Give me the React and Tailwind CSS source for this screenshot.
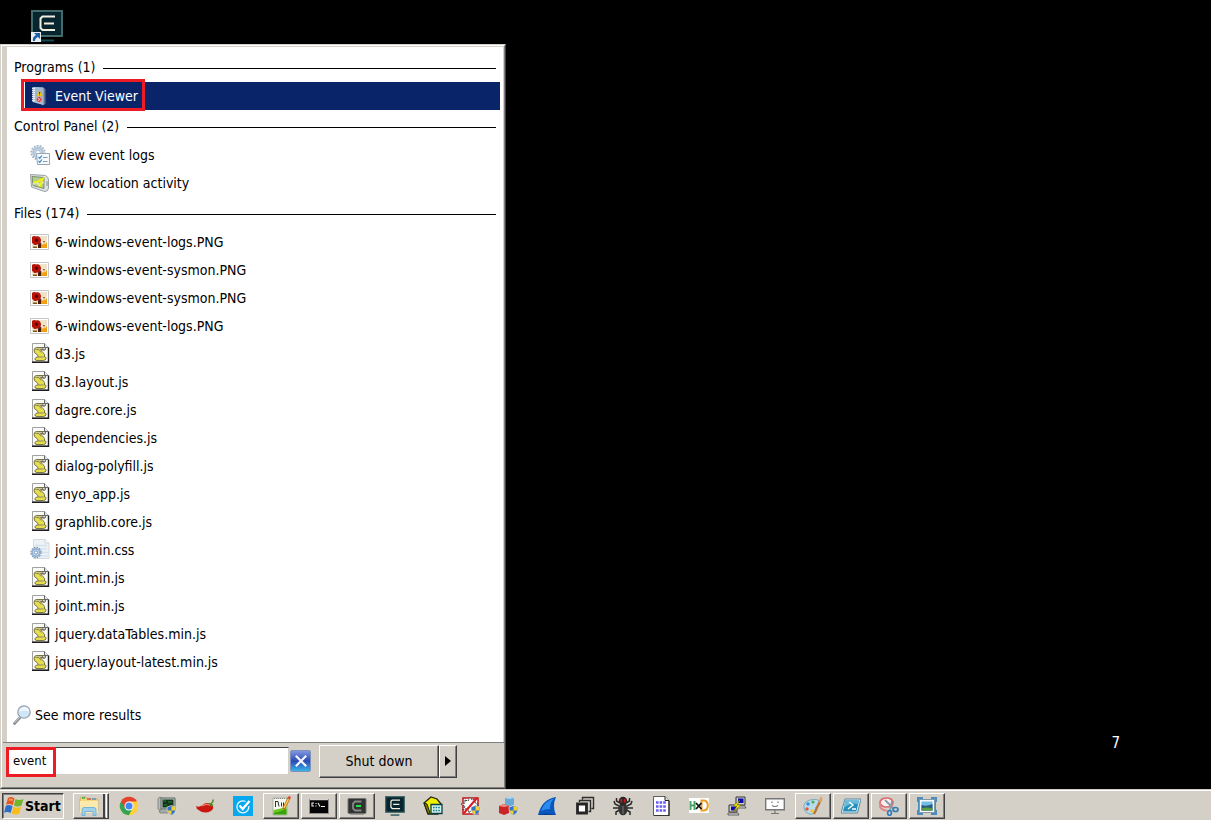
import { useState } from "react";

function EventViewerIcon() {
  return (
    <svg className="w-5 h-5 shrink-0" viewBox="0 0 20 20">
      <path d="M13 1.5 L15.500 3 L15.500 18 L12 19.500 Z" fill="#5f7290" />
      <path d="M2.500 1 L13.500 1.500 L13.500 19 L2.500 16 Z" fill="#b9c9dc" />
      <path d="M5 1.300 L13 1.800 L13 18 L5 15.800 Z" fill="#a3b7d0" />
      <path d="M2 2.500h3M2 4.500h3M2 6.500h3M2 8.500h3M2 10.500h3M2 12.500h3M2 14.500h3" stroke="#eff4fa" strokeWidth=".9" />
      <path d="M9.500 4.500 L12.700 10 L6.500 10 Z" fill="#f9d71c" stroke="#b4930d" strokeWidth=".4" />
      <path d="M9.600 6v2.200M9.600 8.700v.7" stroke="#222" strokeWidth=".9" />
      <circle cx="9.300" cy="13.500" r="2.700" fill="#d9251d" stroke="#f3d5d2" strokeWidth=".5" />
      <path d="M8.100 12.300l2.400 2.400M10.500 12.300l-2.400 2.400" stroke="#fff" strokeWidth=".9" />
    </svg>
  );
}

function GearListIcon() {
  return (
    <svg className="w-5 h-5 shrink-0" viewBox="0 0 20 20">
      <circle cx="8" cy="7.500" r="6.700" fill="none" stroke="#9fb4c8" strokeWidth="1.800" strokeDasharray="1.800 1.200" />
      <circle cx="8" cy="7.500" r="4.600" fill="#dbe6f1" stroke="#b3c6d8" strokeWidth="2.600" />
      <circle cx="8" cy="7.500" r="2.300" fill="#fff" stroke="#8fa9c4" strokeWidth=".8" />
      <path d="M6.500 8.500h13v11h-12z" fill="#f7fafc" stroke="#9aa6b2" />
      <path d="M13 12.500h4.500M13 16.500h4.500" stroke="#8b9aa9" />
      <path d="M8.500 12l1.300 1.300L12 10.500M8.500 16l1.300 1.300 2.200-2.800" fill="none" stroke="#2c86cc" strokeWidth="1.200" />
    </svg>
  );
}

function LocationIcon() {
  return (
    <svg className="w-5 h-5 shrink-0" viewBox="0 0 20 20">
      <path d="M.5 1.500 L15.500 2.500 Q18.500 4 18.500 7 L18.500 15 Q18 18.500 15 18.500 L13 18 L1.500 14 Z" fill="#e0e3e4" stroke="#9aa0a4" />
      <path d="M2 3.500 L14 4.500 L14 15.500 L3 12.500 Z" fill="#b4cf86" stroke="#66785c" strokeWidth=".8" />
      <path d="M3 11 L7 9 L9 12 L13.500 9" fill="none" stroke="#dcebb4" strokeWidth="2" />
      <path d="M3.500 9 L8 8.500 L13 5.500 L11 10 L10 14" fill="none" stroke="#f6f200" strokeWidth="1.700" />
      <path d="M17 8v5" stroke="#82898e" />
    </svg>
  );
}

function ImageIcon() {
  return (
    <svg className="w-5 h-5 shrink-0" viewBox="0 0 20 20">
      <path d="M.5 2.500h18v15H.5z" fill="#fff" stroke="#c6c6c6" />
      <path d="M2 4h15v12H2z" fill="#efe3cb" />
      <path d="M2 5 Q4 3.500 6 4.500 Q8 3.500 10 5.500 Q12 8 10.500 10.500 Q10 13 7 12.500 Q4 14 3 11.500 L2 11z" fill="#b81209" />
      <circle cx="6.500" cy="8.300" r="1.700" fill="#5c0703" />
      <path d="M8 12.500 L11 10.500 L12 16 L8 16z" fill="#4c1a0a" />
      <path d="M11 16 L11 11.500 L13 13 L14 11 L15 12.500 L17 10 L17 16z" fill="#f0a012" />
      <path d="M13 9l1 2 1-2M3 14.500h4V16H3z" fill="#7a5518" />
    </svg>
  );
}

function ScriptIcon() {
  return (
    <svg className="w-5 h-5 shrink-0 -mt-0.5" viewBox="0 0 20 20">
      <path d="M2.500.500 H14.500 L18.500 4.500 V19 H2.500z" fill="#fafafa" stroke="#a2a2a2" />
      <path d="M18.500 4.500V19.300H2" fill="none" stroke="#1e1e1e" strokeWidth="1.400" />
      <path d="M14.500.500v4h4" fill="#e5e5e5" stroke="#444" strokeWidth=".8" />
      <path d="M6.500 4.500h7q2.500 0 1.500 2.500h-2q-.5-1-2-.5 0 1.500 2 3 2.500 2 1.500 4.500 2 0 1.500 1.500-.5 2-2.500 2H7q-2.500 0-2-2 .5-1.500 2.500-1.500 1.500-.5 0-2-4-2-3.500-5 .5-2.500 2.500-2.500z" fill="#e5dd4e" stroke="#6b6836" strokeWidth=".9" />
      <path d="M5.500 6.500h3.500l2 3M7.500 14h6M10 6.500l3 .500" fill="none" stroke="#77745a" strokeWidth=".8" />
      <path d="M6.500 5.500h5" stroke="#c4c3ae" />
      <ellipse cx="14" cy="5.800" rx="1.500" ry="1.200" fill="#fff" stroke="#444" strokeWidth=".8" />
    </svg>
  );
}

function CssIcon() {
  return (
    <svg className="w-5 h-5 shrink-0 -mt-0.5" viewBox="0 0 20 20">
      <path d="M3.500.500 H15 L19 4 V19.500 H3.500z" fill="#edf2f6" stroke="#d3dae0" />
      <path d="M15 .500V4h4" fill="#fff" stroke="#ccd4db" />
      <path d="M5 6.500h12M5 10h12M9 13.500h9M11 17h7" stroke="#d4e2ee" strokeWidth="1.500" />
      <circle cx="6" cy="13.500" r="5" fill="none" stroke="#7f9fc0" strokeWidth="1.500" strokeDasharray="1.600 1" />
      <circle cx="6" cy="13.500" r="3.700" fill="#dce9f5" stroke="#8fb0d0" strokeWidth="1.700" />
      <circle cx="6" cy="13.500" r="1.700" fill="#fff" stroke="#6b91b8" />
    </svg>
  );
}

function SearchIcon() {
  return (
    <svg className="w-5 h-5 shrink-0" viewBox="0 0 20 20">
      <path d="M7 12.500 L1.500 18.500" stroke="#858a90" strokeWidth="2.600" strokeLinecap="round" />
      <path d="M6.500 12.500 L2 17.500" stroke="#cfd4d9" strokeLinecap="round" />
      <circle cx="11" cy="7" r="6.200" fill="#cfe6f8" stroke="#9da4ad" strokeWidth="1.300" />
      <path d="M6 7 Q7.500 2 12.500 2 Q16.500 3.500 16 6.500 Q10.500 4.500 6 7z" fill="#f1f9ff" />
    </svg>
  );
}

function WindowsLogo() {
  return (
    <svg className="w-5 h-5 shrink-0" viewBox="0 0 20 20">
      <path d="M4 2 Q7 0 10.500 2.500 L8.800 9.300 Q5.500 7 2 8.800z" fill="#e8551e" />
      <path d="M11.500 3 Q15 5 19.500 3 L17.500 9.600 Q13.500 11.500 9.900 9.500z" fill="#72b42c" />
      <path d="M1.700 9.900 Q5 8 8.500 10.300 L6.700 17 Q3.500 15 0 16.700z" fill="#2c70cb" />
      <path d="M9.500 10.700 Q13 12.700 17.200 10.700 L15.200 17.500 Q11.500 19.500 7.700 17.500z" fill="#f8bd18" />
      <path d="M5 3 Q7 2 9 3.300L8.400 5Q6.300 4 4.500 4.700z" fill="#f99a5d" />
    </svg>
  );
}

function EmblemIcon({ className = "w-5 h-5" }) {
  return (
    <svg className={className} viewBox="0 0 32 32">
      <rect x="1" y="1" width="30" height="25" fill="#06252e" stroke="#446b6c" strokeWidth="2" />
      <path d="M24 6.500H11.500L9.500 8.500v9.500l2 2H24M13 13.500h10" fill="none" stroke="#f1eddf" strokeWidth="2" />
      <path d="M9 30.500h14" stroke="#174950" strokeWidth="2" />
    </svg>
  );
}

function Shield() {
  return (
    <g>
      <path d="M14.500 9.500 L19 11 Q19.500 17 14.500 19.500 Q9.500 17 10 11z" fill="#2f74c6" stroke="#e5e5dd" strokeWidth=".7" />
      <path d="M14.500 10 L18.500 11.300 L18.500 14.500H14.500zM10.500 14.500h4V19Q11.300 17.500 10.500 14.500" fill="#f5cf32" />
    </g>
  );
}

const drawings = {
  explorer: (
    <>
      <path d="M1 3 Q1 1 3 1h4l1 2h10q1 0 1 2v10H1z" fill="#f4d77e" stroke="#c9a44a" strokeWidth=".7" />
      <path d="M3 2h3" stroke="#35a852" strokeWidth="1.500" />
      <path d="M8 3h4" stroke="#e04836" strokeWidth="1.300" />
      <path d="M13 3h4" stroke="#438bd4" strokeWidth="1.300" />
      <path d="M1 5h18v12H1z" fill="#fbe9ad" />
      <path d="M3 19.500v-6q0-2 2-2h10q2 0 2 2v6h-3v-4H6v4z" fill="#9fd1ee" stroke="#63a9d5" strokeWidth=".8" />
    </>
  ),
  chrome: (
    <>
      <circle cx="10" cy="10" r="9.200" fill="#ffcf3e" />
      <path d="M10 10 L2 5.400 A9.200 9.200 0 0 1 18 5.400z" fill="#e3422f" />
      <path d="M10 10 L2 5.400 A9.200 9.200 0 0 0 10 19.200 L14 12z" fill="#33a552" />
      <path d="M10 5.500h8A9.200 9.200 0 0 1 10 19.200L14 12z" fill="#ffcf3e" />
      <path d="M10 5.500H2L6 12z" fill="#e3422f" />
      <circle cx="10" cy="10" r="4.500" fill="#fff" />
      <circle cx="10" cy="10" r="3.500" fill="#4285f4" />
    </>
  ),
  monitor: (
    <>
      <path d="M1 2.500l2-1.500 2 1v11l-2 1-2-1z" fill="#b7bbb9" stroke="#696d6c" strokeWidth=".7" />
      <path d="M4 2h14v11H4z" fill="#c1c9c4" stroke="#596660" />
      <path d="M5.500 3.500h11v8h-11z" fill="#12351b" />
      <path d="M6 5h3M11 6h4M7 9h3" stroke="#2c8f3e" strokeWidth=".9" />
      <path d="M2 15l3-2h8l-2 4H3z" fill="#a5aba8" stroke="#6d7370" strokeWidth=".7" />
      <Shield />
    </>
  ),
  chili: (
    <>
      <path d="M1 10 Q4 11.500 7 9.500 Q12 5 17 9 Q20 12 16 15 Q9 19 2 13z" fill="#c91712" />
      <path d="M7 10 Q12 7 15 9.500" fill="none" stroke="#f27b66" strokeWidth="1.300" />
      <path d="M13 7.500 Q16 6 18.500 9 L16.500 10.500z" fill="#4c8b24" />
      <path d="M16 7.500 Q18.500 6 18 3.500" fill="none" stroke="#4c8b24" strokeWidth="1.400" />
    </>
  ),
  check: (
    <>
      <path d="M0 0h20v20H0z" fill="#08a8ee" />
      <path d="M15.800 10 A6 6 0 1 1 12.500 5.500" fill="none" stroke="#eaf8ff" strokeWidth="1.300" />
      <path d="M6.500 9.500l3.200 3.500L16.500 5" fill="none" stroke="#fff" strokeWidth="2.400" />
    </>
  ),
  notepad: (
    <>
      <path d="M2 2h14v17H2z" fill="#f6f9f1" stroke="#9caa91" strokeWidth=".8" />
      <path d="M2.500 14 Q8 13 15.500 11v7.500h-13z" fill="#6bc91e" />
      <path d="M2.500 17Q8 16 15.500 13v5.500h-13z" fill="#39a10e" />
      <path d="M4.500 5v6M4.500 5.500h2.500l1 5M10.500 6.500v4M12.500 6.500v4" fill="none" stroke="#333" />
      <path d="M3 2.500h12" stroke="#888" strokeDasharray="1 1" />
      <path d="M18 2 L12.500 13" stroke="#b86d16" strokeWidth="3" />
      <path d="M17.500 3 L13 12" stroke="#ffd24f" strokeWidth="1.500" />
      <path d="M17.500 3L19 .500" stroke="#db4b41" strokeWidth="2.500" />
    </>
  ),
  console: (
    <>
      <path d="M.5 3.500h19v14H.5z" fill="#050505" stroke="#8c8c8c" />
      <path d="M1 3.500h18" stroke="#d7d7d7" strokeWidth="1.500" />
      <path d="M5 7H3v3h2M7 7v1M7 9.500v1M9 7l2 3.500M12 10.500h4" fill="none" stroke="#eee" strokeWidth="1.100" />
    </>
  ),
  terminal: (
    <>
      <rect x="1" y="2.500" width="18" height="15" rx="1" fill="#303331" stroke="#747675" />
      <path d="M14.500 5.500H8L6 7.500v5l2 2h6.500" fill="none" stroke="#858985" strokeWidth="1.800" />
      <path d="M9 10h5" stroke="#1ee34f" strokeWidth="2" />
      <path d="M3 18.500h14" stroke="#999" />
    </>
  ),
  organizer: (
    <>
      <path d="M1 7 L8 1 L14 3 L18 8 L15 18 L5 18z" fill="#f1ee00" stroke="#24240b" strokeWidth="1.300" />
      <path d="M1 7l4 11 2-1L4 8z" fill="#77770a" stroke="#24240b" />
      <path d="M8 8.500h11v9H8z" fill="#d8f1ed" stroke="#073f48" strokeWidth="1.300" />
      <path d="M10 11.500h7M10 14.500h7" stroke="#087f91" strokeWidth="1.600" strokeDasharray="1.600 1" />
    </>
  ),
  blocked: (
    <>
      <path d="M2 2h15v16H2z" fill="#fff" stroke="#bd171c" strokeWidth="1.500" />
      <path d="M4 4l3 1 2-4 2 3 4-1-1 4 4 2-4 1 1 4-4-1-3 4-1-5-5 2 2-4-4-2 4-1z" fill="#fff" stroke="#353535" strokeDasharray="2 1" />
      <path d="M3 17L16 2" stroke="#dc1a20" strokeWidth="2" />
      <Shield />
    </>
  ),
  cubes: (
    <>
      <path d="M6 2l5-1 4 1v7l-5 2-4-2z" fill="#6aaad9" />
      <path d="M6 2l4 1 5-1-4-1z" fill="#b4dcf3" />
      <path d="M0 10l5-2 5 2v7l-5 2-5-2z" fill="#cb2424" />
      <path d="M0 10l5 1 5-1-5-2z" fill="#f38a7b" />
      <Shield />
    </>
  ),
  fin: (
    <>
      <path d="M1 19 Q5 3 19 1 Q15 10 19 19z" fill="#0757bf" />
      <path d="M4 15 Q7 5 17 2.500 Q13 6 13 13 Q8 13 4 15z" fill="#2d8aed" />
      <path d="M1 19Q8 16 19 19z" fill="#043f93" />
    </>
  ),
  windows: (
    <>
      <path d="M7.500 3.500V1.500h11V12.500H16.500M4.500 6V4.500h11v11H13.500" fill="none" stroke="#2d2d2d" strokeWidth="1.400" />
      <path d="M2.500 8h9v9h-9z" fill="#fff" stroke="#252525" strokeWidth="2.800" />
    </>
  ),
  bug: (
    <>
      <path d="M7 7L3.500 5V2M13 7l3.500-2V2M6 10L2 8 1 5M14 10l4-2 1-3M6 12H0M14 12h6M6.500 14L3 16v3M13.500 14l3.500 2v3" fill="none" stroke="#292929" strokeWidth="1.500" />
      <ellipse cx="10" cy="13" rx="4.600" ry="6.300" fill="#343434" />
      <circle cx="10" cy="5" r="4.200" fill="#292929" />
      <path d="M8.300 3v3.500M11.700 3v3.500" stroke="#d4161b" strokeWidth="1.600" />
      <path d="M10 10v8" stroke="#777" />
    </>
  ),
  sheet: (
    <>
      <path d="M2.500.500H14l4 4v15H2.500z" fill="#fff" stroke="#5d5d5d" />
      <path d="M14 .500v4h4" fill="#ddd" stroke="#222" />
      <path d="M18 5v15H3" fill="none" stroke="#111" />
      <path d="M5 6.500h10M5 10.500h10M5 14.500h10" stroke="#665eef" strokeWidth="2.600" strokeDasharray="2.600 1" />
    </>
  ),
  hex: (
    <>
      <path d="M0 2h20v15H0z" fill="#fff" />
      <path d="M1.500 5v9M5.500 5v9M1.500 9.500h4" fill="none" stroke="#48a365" strokeWidth="2" />
      <path d="M12.500 4.500h2.500Q18.800 5 18.800 9.500T15 14.500h-2.500z" fill="none" stroke="#ef9d29" strokeWidth="2" />
      <path d="M7 7l5.500 6M12.500 7L7 13" stroke="#111" strokeWidth="1.800" />
    </>
  ),
  putty: (
    <>
      <path d="M9 1h9v8H9z" fill="#d1d1d1" stroke="#333" />
      <path d="M11 2.500h5.500v4.500H11z" fill="#080aab" />
      <path d="M8 10h10l1 2H8z" fill="#ddd" stroke="#333" strokeWidth=".7" />
      <path d="M2 9h8v7H2z" fill="#d1d1d1" stroke="#333" />
      <path d="M4 10.500h5v4H4z" fill="#080aab" />
      <path d="M1 17h10l1 2H1z" fill="#ddd" stroke="#333" strokeWidth=".7" />
      <path d="M13 4L6 10h4l-4 6 8-7h-4z" fill="#fff200" stroke="#655c00" strokeWidth=".5" />
    </>
  ),
  face: (
    <>
      <path d="M.7 2.700h18.600v11H.7z" fill="#fff" stroke="#777" strokeWidth="1.400" />
      <path d="M7 5.500V7M13 5.500V7M7 9.500q3 2 6 0M10 14v3M6 17.500h8" fill="none" stroke="#777" strokeWidth="1.200" />
    </>
  ),
  paint: (
    <>
      <path d="M1 12Q0 6 7 4q8-2 10 2 1 3-3 4-3 1 0 4-2 5-8 4Q1 16 1 12z" fill="#b7dced" stroke="#6b9fb7" strokeWidth=".8" />
      <circle cx="5" cy="8" r="1.700" fill="#3e89d2" />
      <circle cx="10" cy="6" r="1.600" fill="#50ac4d" />
      <circle cx="4" cy="13" r="1.700" fill="#e55445" />
      <circle cx="9" cy="15" r="1.700" fill="#f1c52f" />
      <path d="M17.500 4L11 18" stroke="#bd7230" strokeWidth="2.200" />
      <path d="M16 6q0-4 3-6 1 4-1 7z" fill="#dfa45d" />
    </>
  ),
  powershell: (
    <>
      <path d="M4 3h16l-3.500 14H0z" fill="#d7edf7" stroke="#5c8aa0" />
      <path d="M4.500 4.500H18L15.300 15.500H2z" fill="#268fb9" />
      <path d="M4.500 4.500H18L17 8Q10 6 3 12z" fill="#68bbdb" />
      <path d="M8 6l4 3-5 4M11 13h4" fill="none" stroke="#fff" strokeWidth="1.400" />
    </>
  ),
  scissors: (
    <>
      <ellipse cx="7.500" cy="6.500" rx="6.500" ry="4.500" fill="#f8eeee" stroke="#dc6b6d" strokeWidth="1.700" />
      <path d="M1 7v4q2 3.500 7 3.500" fill="none" stroke="#d98685" strokeWidth="1.600" />
      <path d="M6 4l9 9M13 5l-2 10" stroke="#879aa9" strokeWidth="1.800" />
      <ellipse cx="10.500" cy="17" rx="1.900" ry="2.300" fill="none" stroke="#337dbb" strokeWidth="1.700" />
      <ellipse cx="16.500" cy="13.500" rx="2.500" ry="2" fill="none" stroke="#337dbb" strokeWidth="1.700" />
    </>
  ),
  viewer: (
    <>
      <path d="M0 1h6v4H4v10h2v4H0v-5h1V6H0zM20 1h-6v4h2v10h-2v4h6v-5h-1V6h1z" fill="#4c8cbd" />
      <path d="M2.500 3.500h15v13h-15z" fill="#f8fbfd" stroke="#8499a8" />
      <path d="M4.500 5.500h11v9h-11z" fill="#74bbe5" />
      <path d="M4.500 9q5 2 11-1v6.500h-11z" fill="#245b7e" />
      <path d="M4.500 12.500q5-2 11 0v2h-11z" fill="#5c9d40" />
    </>
  ),
};

const results = [
  {
    title: "Programs (1)",
    items: [{ name: "Event Viewer", icon: EventViewerIcon, selected: true }],
  },
  {
    title: "Control Panel (2)",
    items: [
      { name: "View event logs", icon: GearListIcon },
      { name: "View location activity", icon: LocationIcon },
    ],
  },
  {
    title: "Files (174)",
    items: [
      { name: "6-windows-event-logs.PNG", icon: ImageIcon },
      { name: "8-windows-event-sysmon.PNG", icon: ImageIcon },
      { name: "8-windows-event-sysmon.PNG", icon: ImageIcon },
      { name: "6-windows-event-logs.PNG", icon: ImageIcon },
      { name: "d3.js", icon: ScriptIcon },
      { name: "d3.layout.js", icon: ScriptIcon },
      { name: "dagre.core.js", icon: ScriptIcon },
      { name: "dependencies.js", icon: ScriptIcon },
      { name: "dialog-polyfill.js", icon: ScriptIcon },
      { name: "enyo_app.js", icon: ScriptIcon },
      { name: "graphlib.core.js", icon: ScriptIcon },
      { name: "joint.min.css", icon: CssIcon },
      { name: "joint.min.js", icon: ScriptIcon },
      { name: "joint.min.js", icon: ScriptIcon },
      { name: "jquery.dataTables.min.js", icon: ScriptIcon },
      { name: "jquery.layout-latest.min.js", icon: ScriptIcon },
    ],
  },
];

const taskbar = [
  { icon: "explorer", open: true, stacked: true },
  { icon: "chrome" },
  { icon: "monitor" },
  { icon: "chili" },
  { icon: "check" },
  { icon: "notepad", open: true },
  { icon: "console", open: true },
  { icon: "terminal", open: true },
  { icon: "emblem" },
  { icon: "organizer" },
  { icon: "blocked" },
  { icon: "cubes" },
  { icon: "fin" },
  { icon: "windows" },
  { icon: "bug" },
  { icon: "sheet" },
  { icon: "hex" },
  { icon: "putty" },
  { icon: "face" },
  { icon: "paint", open: true },
  { icon: "powershell", open: true },
  { icon: "scissors", open: true },
  { icon: "viewer", open: true },
];

const raised =
  "border border-t-white border-l-white border-r-[#404040] border-b-[#404040] shadow-[inset_-1px_-1px_0_#808080]";

function ResultItem({ name, icon: Icon, selected }) {
  return (
    <a
      href="#"
      className={`relative h-7 ml-[18px] mr-[3px] pl-[5px] flex items-center gap-[5px] ${
        selected ? "bg-[#0a246a] text-white" : "text-black"
      }`}
    >
      <Icon />
      <span>{name}</span>
      {selected && (
        <span className="absolute -left-1 -top-[3px] w-[124px] h-8 border-3 border-[#ed1c24]" />
      )}
    </a>
  );
}

function ResultGroup({ title, items }) {
  return (
    <section>
      <h2 className="h-[31px] px-[7px] flex items-center gap-2">
        {title}
        <span className="flex-1 h-px mt-1 bg-black" />
      </h2>
      {items.map((item, i) => (
        <ResultItem key={i} {...item} />
      ))}
    </section>
  );
}

function StartMenu() {
  const [query, setQuery] = useState("event");

  return (
    <div className="w-[506px] flex flex-col bg-[#d4d0c8] border border-t-[#d4d0c8] border-l-[#d4d0c8] border-r-[#404040] border-b-[#404040]">
      <div className="flex-1 flex flex-col border border-t-white border-l-white border-r-[#808080] border-b-[#808080]">
        <div className="flex-1 flex flex-col ml-[5px] mt-px mr-px pt-1 bg-white">
          {results.map((group) => (
            <ResultGroup key={group.title} {...group} />
          ))}
          <a href="#" className="mt-auto mb-[17px] pl-[6px] flex items-center gap-0.5">
            <SearchIcon />
            See more results
          </a>
        </div>
        <div className="h-[45px] ml-px pl-[3px] flex items-start border-t border-[#808080]">
          <div className="relative mt-1">
            <input
              type="text"
              aria-label="Search programs and files"
              value={query}
              onChange={(e) => setQuery(e.target.value)}
              className="block w-[283px] h-7 px-[6px] pb-0.5 text-[13px] bg-white border border-t-[#404040] border-l-[#808080] border-r-[#d4d0c8] border-b-[#d4d0c8] outline-none"
            />
            <span className="absolute left-0 top-0 w-[50px] h-[30px] border-3 border-[#ed1c24] pointer-events-none" />
          </div>
          <button
            type="button"
            aria-label="Clear search"
            onClick={() => setQuery("")}
            className="mt-[7px] ml-px w-[21px] h-[22px] flex items-center justify-center border border-[#7f91bb] rounded-xs bg-linear-to-b from-[#8197e0] via-[#2b49b4] to-[#37b5e3]"
          >
            <svg className="w-3 h-3" viewBox="0 0 12 12">
              <path d="M.8 .8l10.400 10.400M11.200 .8L.8 11.200" stroke="#f3f6ff" strokeWidth="2.200" />
            </svg>
          </button>
          <div className="mt-[2px] ml-2 flex">
            <button type="button" className={`w-[120px] h-[33px] pb-0.5 ${raised}`}>
              Shut down
            </button>
            <button
              type="button"
              aria-label="Shut down options"
              className={`w-[18px] h-[33px] pb-0.5 flex items-center justify-center ${raised}`}
            >
              <svg className="w-[6px] h-[10px]" viewBox="0 0 6 10">
                <path d="M0 0l6 5-6 5z" />
              </svg>
            </button>
          </div>
        </div>
      </div>
    </div>
  );
}

function TaskbarButton({ icon, open, stacked }) {
  return (
    <button
      type="button"
      aria-label={icon}
      className={`w-9 h-[26px] flex items-center justify-center ${open ? raised : ""}`}
    >
      {icon === "emblem" ? (
        <EmblemIcon />
      ) : (
        <svg className="w-5 h-5" viewBox="0 0 20 20">
          {drawings[icon]}
        </svg>
      )}
      {stacked && <span className="w-1 h-full ml-1 -mr-1 border-l-2 border-r border-l-[#404040] border-r-white" />}
    </button>
  );
}

function Taskbar() {
  return (
    <footer className="h-[31px] bg-[#d4d0c8] border-t border-[#d4d0c8]">
      <div className="pt-0.5 pl-0.5 border-t border-white flex gap-[9px]">
        <button
          type="button"
          className="w-[62px] h-[26px] pl-px flex items-center gap-px text-[14px] font-bold border border-t-[#404040] border-l-[#404040] border-r-white border-b-white shadow-[inset_1px_1px_0_#808080]"
        >
          <WindowsLogo />
          Start
        </button>
        <nav className="flex gap-0.5">
          {taskbar.map((item) => (
            <TaskbarButton key={item.icon} {...item} />
          ))}
        </nav>
      </div>
    </footer>
  );
}

function App() {
  return (
    <div className="min-h-screen flex flex-col bg-black text-black text-[14px] leading-5 font-['Tahoma','DejaVu_Sans_Condensed','DejaVu_Sans',sans-serif]">
      <header className="h-11 pl-[31px] pt-[10px]">
        <a href="#" aria-label="Desktop shortcut" className="relative block w-8 h-8">
          <EmblemIcon className="w-8 h-8" />
          <svg className="absolute left-0 bottom-0 w-[10px] h-[10px]" viewBox="0 0 10 10">
            <path d="M0 0h10v10H0z" fill="#e9eef3" />
            <path d="M3 1h6v6L7 5Q4 6 4 9H2Q1 5 5 3z" fill="#1c5fab" />
          </svg>
        </a>
      </header>
      <main className="flex-1 flex justify-between">
        <StartMenu />
        <p className="self-end pr-[91px] pb-9 text-white text-[15px]">7</p>
      </main>
      <Taskbar />
    </div>
  );
}

export default App;
